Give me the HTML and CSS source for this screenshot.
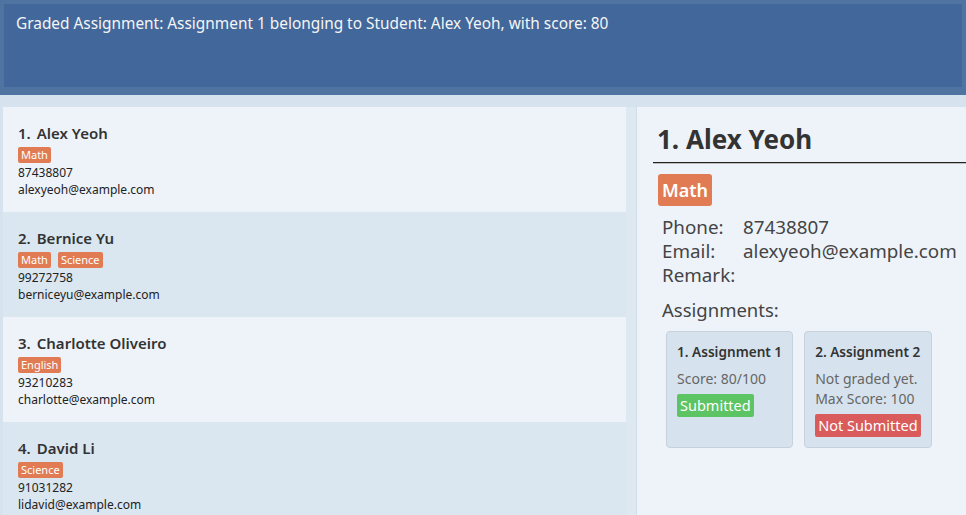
FILE: index.html
```html
<!DOCTYPE html>
<html lang="en">
<head>
<meta charset="utf-8">
<title>Students</title>
<link rel="stylesheet" href="styles.css">
</head>
<body>
<div class="result">
  <div class="result-box">Graded Assignment: Assignment 1 belonging to Student: Alex Yeoh, with score: 80</div>
</div>
<div class="main">
  <div class="list">
    <div class="card light">
      <div class="name"><span class="idx">1.</span>Alex Yeoh</div>
      <div class="tags"><span class="tag">Math</span></div>
      <div class="line">87438807</div>
      <div class="line">alexyeoh@example.com</div>
    </div>
    <div class="card dark">
      <div class="name"><span class="idx">2.</span>Bernice Yu</div>
      <div class="tags"><span class="tag">Math</span><span class="tag">Science</span></div>
      <div class="line">99272758</div>
      <div class="line">berniceyu@example.com</div>
    </div>
    <div class="card light">
      <div class="name"><span class="idx">3.</span>Charlotte Oliveiro</div>
      <div class="tags"><span class="tag">English</span></div>
      <div class="line">93210283</div>
      <div class="line">charlotte@example.com</div>
    </div>
    <div class="card dark">
      <div class="name"><span class="idx">4.</span>David Li</div>
      <div class="tags"><span class="tag">Science</span></div>
      <div class="line">91031282</div>
      <div class="line">lidavid@example.com</div>
    </div>
  </div>
  <div class="divider"></div>
  <div class="detail">
    <div class="heading">1. Alex Yeoh</div>
    <div class="big-tags"><span class="big-tag">Math</span></div>
    <div class="fields">
      <div class="field"><span class="label">Phone:</span><span class="value">87438807</span></div>
      <div class="field"><span class="label">Email:</span><span class="value">alexyeoh@example.com</span></div>
      <div class="field"><span class="label">Remark:</span><span class="value"></span></div>
    </div>
    <div class="assign-title">Assignments:</div>
    <div class="assignments">
      <div class="acard">
        <div class="atitle">1. Assignment 1</div>
        <div class="aline first">Score: 80/100</div>
        <div class="badge green">Submitted</div>
      </div>
      <div class="acard">
        <div class="atitle">2. Assignment 2</div>
        <div class="aline first">Not graded yet.</div>
        <div class="aline">Max Score: 100</div>
        <div class="badge red">Not Submitted</div>
      </div>
    </div>
  </div>
</div>
</body>
</html>
```
FILE: styles.css
```css
* { box-sizing: border-box; }
html, body { margin: 0; padding: 0; }
body {
  background: #d6e3ee;
  font-family: "Noto Sans", "Open Sans", sans-serif;
  color: #333;
  width: 966px;
  height: 515px;
  overflow: hidden;
}
.result {
  background: #5074a1;
  height: 95px;
  padding: 4px 4px 8px 4px;
}
.result-box {
  background: #42679a;
  height: 100%;
  padding: 10px 12px;
  color: #f5f5f5;
  font-size: 15.4px;
  line-height: 20px;
}
.main {
  display: flex;
  padding-top: 12px;
  padding-left: 3px;
  height: 420px;
}
.list {
  width: 623px;
  display: flex;
  flex-direction: column;
}
.card {
  height: 105px;
  flex: none;
  padding: 16px 15px 0 15px;
}
.card.light { background: #eef3fa; }
.card.dark { background: #dae6f0; }
.name {
  font-size: 15px;
  font-weight: 600;
  line-height: 20px;
  color: #333;
}
.idx { margin-right: 6px; }
.tags {
  display: flex;
  gap: 7px;
  margin-top: 4px;
  margin-bottom: 1px;
}
.tag {
  background: #e07b53;
  color: #fff;
  font-size: 11px;
  line-height: 16px;
  padding: 0 3px;
  border-radius: 2px;
}
.line {
  font-size: 12px;
  line-height: 17px;
  color: #222;
}
.divider {
  width: 11px;
  flex: none;
  background: #dde8f1;
  border-right: 1px solid #d0dde8;
}
.detail {
  flex: 1;
  background: #eef3fa;
  padding-left: 16px;
}
.heading {
  font-size: 26px;
  font-weight: bold;
  line-height: 34px;
  padding: 15px 0 0 4px;
  height: 56px;
  color: #333;
  border-bottom: 1px solid #222;
  box-shadow: 0 1px 0 #bdbdbd;
}
.big-tags {
  margin-top: 11px;
  padding-left: 5px;
  display: flex;
}
.big-tag {
  background: #e07b53;
  color: #fff;
  font-size: 18px;
  font-weight: 600;
  line-height: 32px;
  padding: 0 4px;
  border-radius: 3px;
}
.fields {
  margin-top: 9px;
  padding-left: 9px;
}
.field {
  display: flex;
  font-size: 18.8px;
  line-height: 24px;
  color: #444;
  height: 24px;
}
.label { width: 81px; flex: none; }
.assign-title {
  margin-top: 11px;
  padding-left: 9px;
  font-size: 18.5px;
  line-height: 24px;
  color: #444;
}
.assignments {
  display: flex;
  gap: 11px;
  margin-top: 9px;
  padding-left: 13px;
  align-items: stretch;
}
.acard {
  background: #d6e3ee;
  border: 1px solid #c6d1db;
  border-radius: 4px;
  padding: 10px;
}
.atitle {
  font-size: 13.6px;
  font-weight: 600;
  line-height: 20px;
  color: #333;
}
.aline {
  font-size: 14px;
  line-height: 20px;
  color: #666;
}
.aline.first { margin-top: 7px; }
.badge {
  display: inline-block;
  margin-top: 5px;
  font-size: 14.5px;
  line-height: 23px;
  padding: 0 3px;
  color: #fff;
  border-radius: 2px;
}
.badge.green { background: #5cc462; }
.badge.red { background: #d95b5b; }
```
